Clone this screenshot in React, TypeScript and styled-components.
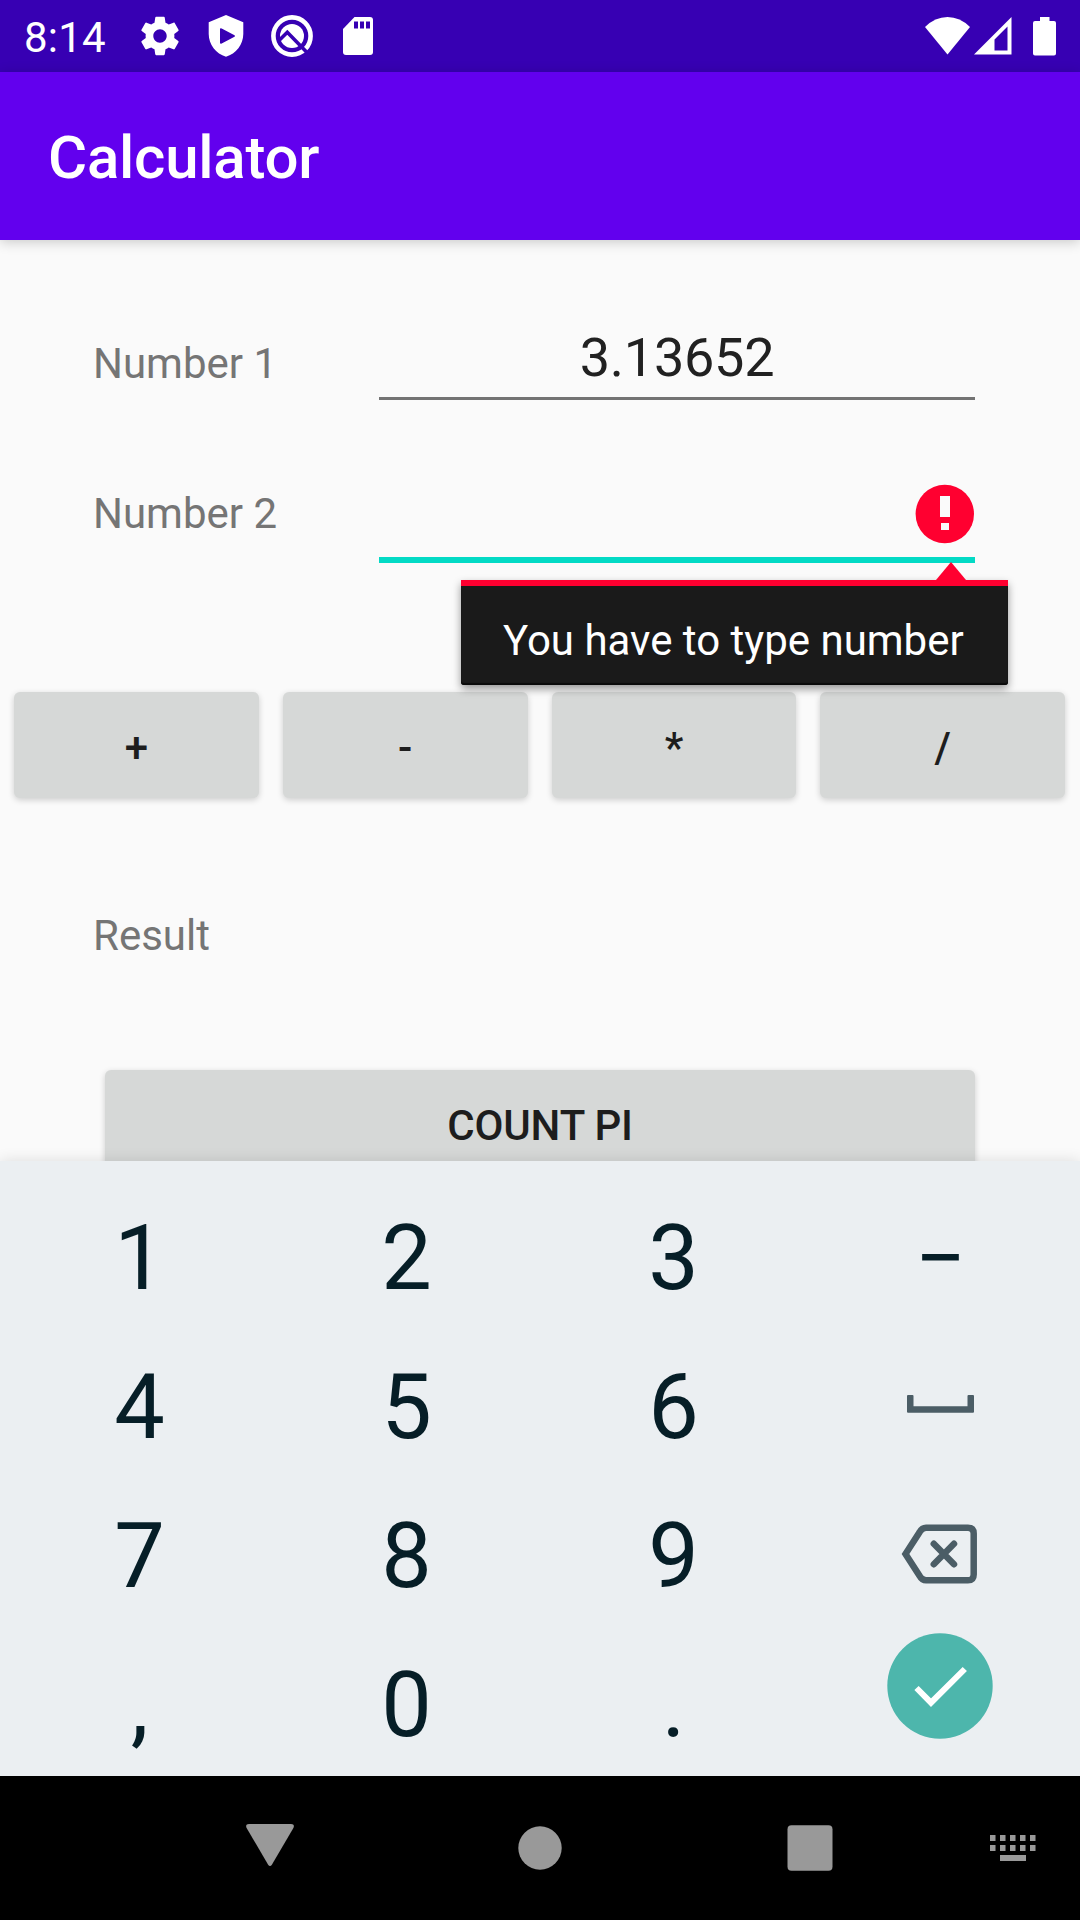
import React from 'react';
import styled, { createGlobalStyle } from 'styled-components';

const GlobalStyle = createGlobalStyle`
  *, *::before, *::after { box-sizing: border-box; }
  body { margin: 0; background: #fafafa; }
  button { font: inherit; border: 0; padding: 0; margin: 0; background: none; }
  svg { display: block; flex: none; }
`;

const Screen = styled.div`
  display: flex;
  flex-direction: column;
  width: 1080px;
  height: 1920px;
  overflow: hidden;
  background: #fafafa;
  font-family: Roboto, 'Noto Sans', sans-serif;
`;

const StatusBar = styled.header`
  display: flex;
  align-items: center;
  flex: none;
  height: 72px;
  padding: 0 24px;
  background: #3700b3;
  color: #fff;
`;

const Clock = styled.span`
  width: 103px;
  padding-top: 3px;
  font-size: 42px;
  line-height: 49px;
  letter-spacing: 0.2px;
`;

const Notifications = styled.div`
  display: grid;
  grid-template-columns: repeat(4, 66px);
  place-items: center;
`;

const SystemIcons = styled.div`
  display: flex;
  align-items: center;
  gap: 4px;
  margin-left: auto;
`;

const BatterySlot = styled.div`
  margin-left: 17px;
`;

const AppBar = styled.div`
  display: flex;
  align-items: center;
  flex: none;
  height: 168px;
  padding: 4px 48px 0;
  background: #6200ee;
  box-shadow: 0 2px 12px rgba(0, 0, 0, 0.2);
  z-index: 1;
`;

const Title = styled.h1`
  margin: 0;
  color: #fff;
  font-size: 60px;
  font-weight: 500;
  line-height: 70px;
  letter-spacing: -0.25px;
`;

const Content = styled.main`
  flex: 1;
  min-height: 0;
  overflow: hidden;
`;

const FieldRow = styled.div<{ $height: number }>`
  display: flex;
  align-items: flex-end;
  height: ${(p) => p.$height}px;
  padding: 0 105px 0 93px;
`;

const Label = styled.label<{ $drop?: number }>`
  display: block;
  width: 286px;
  margin-bottom: ${(p) => p.$drop ?? 0}px;
  color: #757575;
  font-size: 42px;
  line-height: 49px;
`;

const Field = styled.div<{ $focused?: boolean }>`
  position: relative;
  display: flex;
  align-items: center;
  justify-content: ${(p) => (p.$focused ? 'flex-end' : 'center')};
  flex: 1;
  padding-bottom: ${(p) => (p.$focused ? 13 : 8)}px;
  border-bottom: ${(p) => (p.$focused ? '6px solid #03dac5' : '3px solid #737373')};
  color: #212121;
  font-size: 54px;
  line-height: 63px;
  letter-spacing: -0.25px;
`;

const ErrorPopup = styled.div`
  position: absolute;
  top: 96px;
  right: -33px;
  width: 547px;
  height: 105px;
  padding: 30px 0 0 42px;
  border-top: 6px solid #ff0030;
  border-radius: 0 0 3px 3px;
  background: #1a1a1a;
  box-shadow: 0 4px 8px rgba(0, 0, 0, 0.4), inset 0 -2px 1px #0a0a0a;
  color: #fff;
  font-size: 42px;
  line-height: 49px;
  letter-spacing: 0;
  white-space: nowrap;
  z-index: 2;

  &::before {
    content: '';
    position: absolute;
    top: -24px;
    right: 42px;
    border: solid transparent;
    border-width: 0 15px 18px;
    border-bottom-color: #ff0030;
  }
`;

const RaisedButton = styled.button`
  flex: 1;
  height: 106px;
  padding-top: 5px;
  border-radius: 6px;
  background: #d6d8d7;
  box-shadow: 0 2px 6px rgba(0, 0, 0, 0.18);
  color: #1d1d1d;
  font-size: 42px;
  font-weight: 500;
  line-height: 49px;
  letter-spacing: -0.15px;
`;

const Operators = styled.div`
  display: flex;
  gap: 24px;
  margin: 129px 15px 113px 14px;
`;

const ResultRow = styled.div`
  padding-left: 93px;
`;

const CountRow = styled.div`
  display: flex;
  margin: 110px 105px 0;
`;

const Keyboard = styled.section`
  display: grid;
  grid-template-columns: repeat(4, 1fr);
  grid-auto-rows: 149px;
  flex: none;
  height: 615px;
  padding: 23px 6px 0;
  background: #ebeff2;
  box-shadow: 0 0 14px rgba(0, 0, 0, 0.12);
  z-index: 3;
`;

const Key = styled.button<{ $lift?: number; $inset?: number }>`
  display: flex;
  align-items: center;
  justify-content: center;
  padding-bottom: ${(p) => p.$lift ?? 0}px;
  padding-right: ${(p) => p.$inset ?? 0}px;
  color: #061e27;
  font-size: 90px;
  line-height: 105px;
`;

const NavBar = styled.nav`
  display: grid;
  grid-template-columns: 135px repeat(3, 270px) 135px;
  flex: none;
  height: 144px;
  background: #000;
`;

const NavButton = styled.button<{ $lift?: number }>`
  display: flex;
  align-items: center;
  justify-content: center;
  padding-bottom: ${(p) => p.$lift ?? 0}px;
`;

const GearIcon = () => (
  <svg width="46" height="46" viewBox="0 0 24 24" fill="#fff">
    <path d="M19.43 12.98c.04-.32.07-.64.07-.98s-.03-.66-.07-.98l2.11-1.65c.19-.15.24-.42.12-.64l-2-3.46c-.12-.22-.39-.3-.61-.22l-2.49 1c-.52-.4-1.08-.73-1.69-.98l-.38-2.65C14.46 2.18 14.25 2 14 2h-4c-.25 0-.46.18-.49.42l-.38 2.65c-.61.25-1.17.59-1.69.98l-2.49-1c-.23-.09-.49 0-.61.22l-2 3.46c-.13.22-.07.49.12.64l2.11 1.65c-.04.32-.07.65-.07.98s.03.66.07.98l-2.11 1.65c-.19.15-.24.42-.12.64l2 3.46c.12.22.39.3.61.22l2.49-1c.52.4 1.08.73 1.69.98l.38 2.65c.03.24.24.42.49.42h4c.25 0 .46-.18.49-.42l.38-2.65c.61-.25 1.17-.59 1.69-.98l2.49 1c.23.09.49 0 .61-.22l2-3.46c.12-.22.07-.49-.12-.64l-2.11-1.65zM12 15.5c-1.93 0-3.5-1.57-3.5-3.5s1.57-3.5 3.5-3.5 3.5 1.57 3.5 3.5-1.57 3.5-3.5 3.5z" />
  </svg>
);

const ShieldIcon = () => (
  <svg width="36" height="42" viewBox="0 0 36 42" fill="#fff" fillRule="evenodd">
    <path d="M18 0L35.3 7.2V19C35.3 29.5 28 38.8 18 41.7C8 38.8.7 29.5.7 19V7.2ZM12 14.2V27.4Q12 29.3 13.7 28.5L26.5 21.8Q27.6 21 26.5 20.2L13.7 13.4Q12 12.6 12 14.2Z" />
  </svg>
);

const SearchRingIcon = () => (
  <svg width="42" height="42" viewBox="0 0 42 42" fill="none">
    <circle cx="21" cy="21" r="18.6" stroke="#fff" strokeWidth="4.6" />
    <circle cx="21" cy="21" r="12" fill="#fff" />
    <path d="M8.5 25L16.3 17.3L36.5 38" stroke="#3700b3" strokeWidth="3.6" />
  </svg>
);

const SdCardIcon = () => (
  <svg width="30" height="38" viewBox="0 0 30 38">
    <path fill="#fff" d="M11.5 0H27Q30 0 30 3V35Q30 38 27 38H3Q0 38 0 35V12Z" />
    <path fill="#3700b3" d="M11 4.500h4v7h-4zM17 4.500h4v7h-4zM23 4.500h4v7h-4z" />
  </svg>
);

const WifiIcon = () => (
  <svg width="45" height="38" viewBox="0 0 45 38" fill="#fff">
    <path d="M22.5 37.5L0 10Q10 0 22.5 0T45 10Z" />
  </svg>
);

const SignalIcon = () => (
  <svg width="38" height="38" viewBox="0 0 38 38" fill="#fff" fillRule="evenodd">
    <path d="M37.5 0V37.5H0ZM33.5 9.5L20.5 22.5V33.5H33.5Z" />
  </svg>
);

const BatteryIcon = () => (
  <svg width="23" height="39" viewBox="0 0 23 39" fill="#fff">
    <path d="M7 0H16.5V4H21Q23 4 23 6V36.5Q23 38.5 21 38.5H2Q0 38.5 0 36.5V6Q0 4 2 4H7Z" />
  </svg>
);

const ErrorIcon = () => (
  <svg width="60" height="60" viewBox="0 0 60 60">
    <circle cx="29.8" cy="30" r="29.2" fill="#ff0030" />
    <path fill="#fafafa" d="M25 12h10v21H25zM26 39h8v7h-8z" />
  </svg>
);

const SpaceIcon = () => (
  <svg width="67" height="18" viewBox="0 0 67 18" fill="#4b5d66">
    <path d="M1 0H5.5Q6.5 0 6.5 1V11.3H60.5V1Q60.5 0 61.5 0H66Q67 0 67 1V16.6Q67 17.8 66 17.8H1Q0 17.8 0 16.6V1Q0 0 1 0Z" />
  </svg>
);

const BackspaceIcon = () => (
  <svg width="77" height="60" viewBox="0 0 77 60" fill="none" stroke="#4b5d66" strokeWidth="6.5">
    <path d="M4.5 30L18.5 8.3Q21 3.7 25 3.7H67Q72.7 3.7 72.7 9.5V50.5Q72.7 56.3 67 56.3H25Q21 56.3 18.5 51.7Z" />
    <path strokeLinecap="round" d="M32.8 19.8L53 40.2M53 19.8L32.8 40.2" />
  </svg>
);

const ConfirmIcon = () => (
  <svg width="106" height="106" viewBox="0 0 106 106">
    <circle cx="53" cy="53" r="52.7" fill="#4db6ac" />
    <path fill="none" stroke="#fff" strokeWidth="6" d="M29.5 55L44 69.7L77.8 36" />
  </svg>
);

const NavBack = () => (
  <svg width="48" height="42" viewBox="0 0 48 42" fill="#999">
    <path d="M3 0H45Q49 0 47.4 4L26 40.5Q24 43.5 22 40.5L.6 4Q-1 0 3 0Z" />
  </svg>
);

const NavHome = () => (
  <svg width="44" height="44" viewBox="0 0 44 44" fill="#999">
    <circle cx="22" cy="22" r="21.7" />
  </svg>
);

const NavRecents = () => (
  <svg width="46" height="46" viewBox="0 0 46 46" fill="#999">
    <rect x=".5" y=".3" width="45" height="45.4" rx="4" />
  </svg>
);

const NavKeyboard = () => (
  <svg width="46" height="26" viewBox="0 0 46 26" fill="#999">
    {[0, 10, 20, 30, 40].map((x) => (
      <React.Fragment key={x}>
        <rect x={x} y="0" width="5.5" height="6" />
        <rect x={x} y="10" width="5.5" height="6" />
      </React.Fragment>
    ))}
    <rect x="10" y="20" width="26" height="6" />
  </svg>
);

export default function App() {
  return (
    <Screen>
      <GlobalStyle />
      <StatusBar>
        <Clock>8:14</Clock>
        <Notifications>
          <GearIcon />
          <ShieldIcon />
          <SearchRingIcon />
          <SdCardIcon />
        </Notifications>
        <SystemIcons>
          <WifiIcon />
          <SignalIcon />
          <BatterySlot>
            <BatteryIcon />
          </BatterySlot>
        </SystemIcons>
      </StatusBar>
      <AppBar>
        <Title>Calculator</Title>
      </AppBar>
      <Content>
        <FieldRow $height={160}>
          <Label $drop={12}>Number 1</Label>
          <Field>3.13652</Field>
        </FieldRow>
        <FieldRow $height={163}>
          <Label $drop={25}>Number 2</Label>
          <Field $focused>
            <ErrorIcon />
            <ErrorPopup>You have to type number</ErrorPopup>
          </Field>
        </FieldRow>
        <Operators>
          {['+', '-', '*', '/'].map((op) => (
            <RaisedButton key={op}>{op}</RaisedButton>
          ))}
        </Operators>
        <ResultRow>
          <Label>Result</Label>
        </ResultRow>
        <CountRow>
          <RaisedButton>COUNT PI</RaisedButton>
        </CountRow>
      </Content>
      <Keyboard>
        <Key>1</Key>
        <Key>2</Key>
        <Key>3</Key>
        <Key>−</Key>
        <Key>4</Key>
        <Key>5</Key>
        <Key>6</Key>
        <Key $lift={7}><SpaceIcon /></Key>
        <Key>7</Key>
        <Key>8</Key>
        <Key>9</Key>
        <Key $lift={5} $inset={2}><BackspaceIcon /></Key>
        <Key>,</Key>
        <Key>0</Key>
        <Key>.</Key>
        <Key $lift={39} $inset={1}><ConfirmIcon /></Key>
      </Keyboard>
      <NavBar>
        <span />
        <NavButton $lift={6}><NavBack /></NavButton>
        <NavButton><NavHome /></NavButton>
        <NavButton><NavRecents /></NavButton>
        <NavButton><NavKeyboard /></NavButton>
      </NavBar>
    </Screen>
  );
}
